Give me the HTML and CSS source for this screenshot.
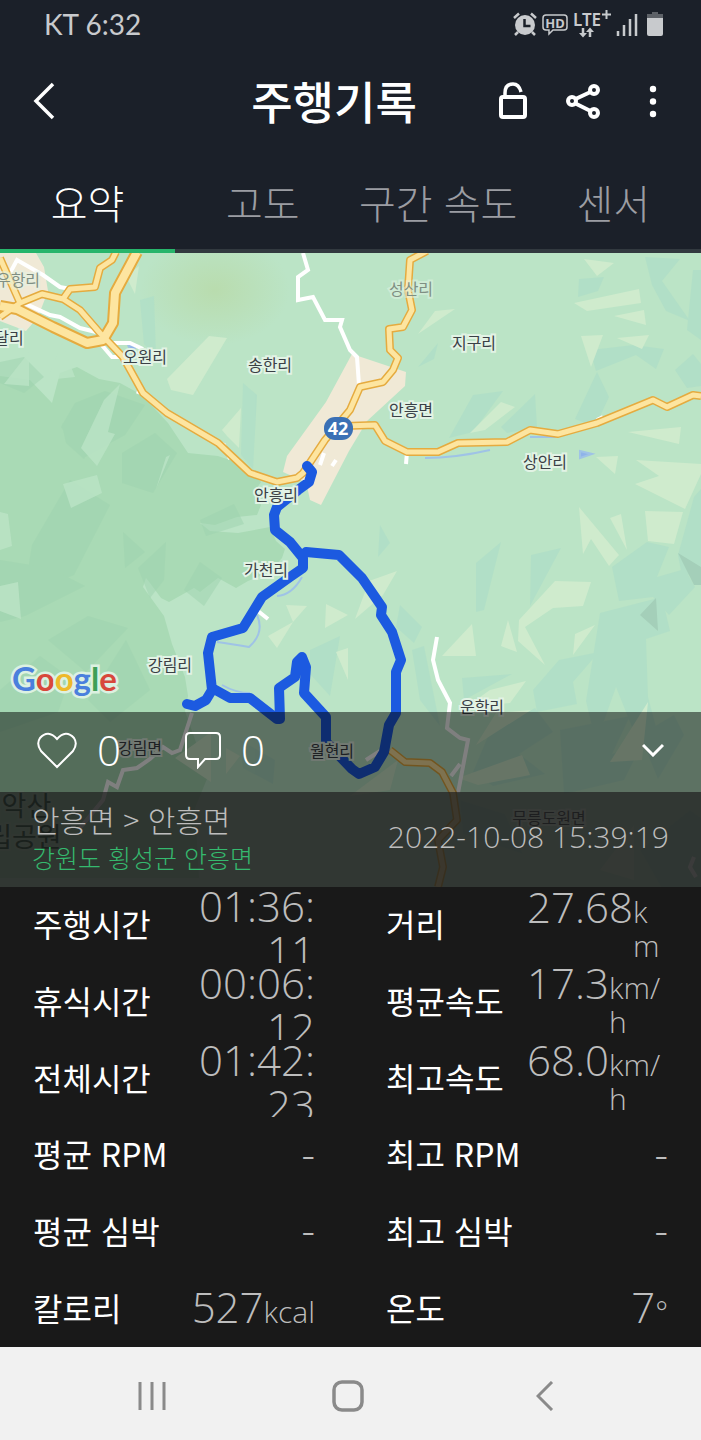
FILE: index.html
```html
<!DOCTYPE html>
<html lang="ko">
<head>
    <meta charset="UTF-8">
    <title>주행기록</title>
    <meta name="viewport" content="width=device-width, initial-scale=1.0">
    <link rel="stylesheet" href="styles.css">
</head>
<body>
    <div class="status-bar">
        <span>KT 6:32</span>
        <div class="status-icons">
            <!-- alarm -->
            <svg width="26" height="26" viewBox="0 0 26 26">
                <circle cx="13" cy="14" r="10" fill="#c8cacd"/>
                <path d="M2 7l5-4.500M24 7l-5-4.500M6 21l-3 3M20 21l3 3" stroke="#c8cacd" stroke-width="2.500" fill="none"/>
                <path d="M12.500 8v7h6" stroke="#1b2029" stroke-width="2.500" fill="none"/>
            </svg>
            <!-- HD voice -->
            <svg width="26" height="26" viewBox="0 0 26 26">
                <path d="M4 4h18q3 0 3 3v9q0 3-3 3H11l-4 4v-4H4q-3 0-3-3V7q0-3 3-3z" stroke="#c8cacd" stroke-width="1.500" fill="none"/>
                <text x="13" y="16.500" class="hd-text">HD</text>
            </svg>
            <!-- network -->
            <svg width="40" height="28" viewBox="0 0 40 28">
                <text x="1" y="16" class="lte-text">LTE</text>
                <path d="M30 4.500h9M34.500 0v9" stroke="#c8cacd" stroke-width="2"/>
                <path d="M11 18v7M18 27v-7" stroke="#c8cacd" stroke-width="2.500"/>
                <path d="M7 23h8l-4 4.500zM14 22h8l-4-4.500z" fill="#c8cacd"/>
            </svg>
            <!-- signal -->
            <svg width="22" height="26" viewBox="0 0 22 26">
                <path d="M2 20v5M8 14v11M14 8v17M20 3v22" stroke="#c8cacd" stroke-width="2.500"/>
            </svg>
            <!-- battery -->
            <svg width="16" height="26" viewBox="0 0 16 26">
                <path d="M5 1h6v2h5v5H0V3h5z" fill="#5d6167"/>
                <path d="M0 7h16v16q0 2-2 2H2q-2 0-2-2z" fill="#c8cacd"/>
            </svg>
        </div>
    </div>

    <header class="header">
        <button class="icon-btn back" aria-label="뒤로">
            <svg width="24" height="38" viewBox="0 0 24 38"><path d="M21 2L4 19l17 17" stroke="#fff" stroke-width="3.500" fill="none"/></svg>
        </button>
        <h1>주행기록</h1>
        <div class="actions">
            <button class="icon-btn" aria-label="잠금 해제">
                <svg width="30" height="38" viewBox="0 0 30 38" fill="none" stroke="#fff" stroke-width="4">
                    <rect x="3" y="15" width="24" height="20" rx="2"/>
                    <path d="M7 15v-4Q7 2 15 2q6 0 8 8" stroke-width="3.500"/>
                </svg>
            </button>
            <button class="icon-btn" aria-label="공유">
                <svg width="36" height="38" viewBox="0 0 36 38" fill="none" stroke="#fff" stroke-width="4">
                    <circle cx="7" cy="19" r="4"/>
                    <circle cx="29" cy="8" r="4"/>
                    <circle cx="29" cy="31" r="4"/>
                    <path d="M10.500 17l15-7M10.500 21.500l15 7.500"/>
                </svg>
            </button>
            <button class="icon-btn" aria-label="더보기">
                <svg width="8" height="38" viewBox="0 0 8 38" fill="#fff">
                    <circle cx="4" cy="7" r="3.200"/>
                    <circle cx="4" cy="19.500" r="3.200"/>
                    <circle cx="4" cy="32" r="3.200"/>
                </svg>
            </button>
        </div>
    </header>

    <nav class="tabs">
        <button class="tab active">요약</button>
        <button class="tab">고도</button>
        <button class="tab">구간 속도</button>
        <button class="tab">센서</button>
    </nav>

    <main class="map">
        <svg class="map-canvas" viewBox="0 253 701 634" preserveAspectRatio="xMidYMid slice">
            <defs>
                <radialGradient id="haze">
                    <stop offset="0" stop-color="#b9dcae"/>
                    <stop offset="1" stop-color="#b9dcae" stop-opacity="0"/>
                </radialGradient>
            </defs>
            <rect y="253" width="701" height="634" fill="#bbe4c6"/>
            <ellipse cx="215" cy="290" rx="75" ry="55" fill="url(#haze)"/>

            <!-- forest -->
            <path class="forest" d="M0 376l30 4 22 23 8-30 17-6 22 12 21 4 22 12 26 28 20 30 30 3 18 6 13 8 12 12-6 9 6 14-4 10-20 2-22 8-15-2 10 8 28 2 32-6 6 14 9 8-3 9-12 14-22 9-12 7-18-10-18 14-6-4-25 14-8-4-11-15-4-5-3 9 21 29 8 28 13 33 3 19-3 15 14 40 10 23-14 34 4 70H0z"/>
            <g class="shade">
                <path d="M0 362l24-5 20 20-20 16-24-10zM75 403l30-12 40 14-20 30-40 22-24-30z"/>
                <path d="M62 425l18-20 22 20-18 34-18-16zM70 480l40 25-36 70-50 20 8-50z"/>
                <path d="M122 453l33-20 22 20-24 40-31-10zM123 532l22 20-20 16zM138 568l28-26-2 38-14 18z"/>
                <path d="M184 590l16-28 22 16-18 28zM0 560l50 8 35 18-60 30-25 6zM48 640l40-24 40 12-42 44z"/>
                <path d="M0 690l40-34 30 22-12 34-58 20zM88 700l38-60 24 50-40 32zM200 520l34-16 10 20-38 12z"/>
            </g>
            <g class="pale">
                <path d="M63 484l34-9 5 18-31 15zM0 512l8 2 4 32-12 4zM0 586l18-4 3 37-21-8z"/>
                <path d="M104 400l16-16-12 48 7 2-18 32-16-18zM45 385l17-42 13 34-28 3z"/>
                <path d="M4 384l25-32v34zM170 455l-14 34 10-32z"/>
            </g>

            <!-- woods and open land -->
            <g class="wood">
                <path d="M140 300l14-4 2 60-12-12zM243 383l14 12-4 74-12-14zM579 279l25-2-6 14-20 6z"/>
                <path d="M645 257l35 2-18 22 28 40-24-10-14-26zM596 371l-6-21 44-5 30 4-8 20-20-14z"/>
                <path d="M693 270h8v70l-14-10zM675 370l18-16 8 10v22l-14 2zM597 372l12 25-14 30-20-8z"/>
                <path d="M473 395l30-4-30 41-24 6zM501 427l34-33 2 33-30 6zM418 367l20-24-4 16z"/>
                <path d="M476 563l25-21-17 68-8 2zM531 555l30-7-31 58zM380 525l10 18-12 14z"/>
                <path d="M612 567l35-25 22 5-12 30 28-8 10 18-26 28-16-18-34 4z"/>
                <path d="M678 555l16-58 7-8v92l-20-10zM600 613l62-16 8 34-24 8 2 58 16 60-30-25-18-45-20 56-10-42z"/>
                <path d="M533 690l26-30 40-8-26 30 4 22-40 8zM400 605l22 22-8 16-18-16zM412 650l12-4 16 80-20-26z"/>
                <path d="M473 772l16-38 46-26 18 24-34 22 26 20-52 12zM560 730l70-14-18 38 30-10-18 36-60 14z"/>
                <path d="M640 735l34-20 10 20-26 44zM460 800l45 14 18 40-60-20zM640 850l50-40 11 8v69h-40z"/>
                <path d="M310 650l30-14-10 60-20-22zM240 740l35 20-2 24-30-16zM462 678l50-4-48 26z"/>
            </g>
            <g class="open">
                <path d="M167 379l42-43 18 2-34 57-22-5zM222 430l19-22-2 40-12-12zM126 276l13-10-4 28z"/>
                <path d="M584 259l30 4-17 13zM574 303l65-14 2 14-54 8zM614 316l30-6 2 15zM581 336l22-1-12 32zM617 338l32-3-7 14z"/>
                <path d="M435 311l20-2-37 25zM470 433l31-31 14 5-30 23zM628 432l53-5-2 17zM596 457l22-1-3 18z"/>
                <path d="M636 460l65 4v10l-16 35-50-25 24-8zM645 511l38 1-9 32-26-3zM579 507l40 48-10 11-18-27-8 15z"/>
                <path d="M610 518l11-4 6 36zM555 581l36 1-8 24-30 2-28 19 20 38-27-24 1-21zM442 656l30-32 4 32zM508 620l9 32-16-6z"/>
                <path d="M575 634l20-9-22 30zM369 581l28-10-14 24-28 24zM490 690l36-9-16 22-44 4zM286 605l21 1-14 16z"/>
                <path d="M326 604l22 11-23 13zM268 636l25-14-16 26zM336 652l12-4v32zM350 796l48-36-8 30z"/>
                <path d="M458 778l64-23 8 20-52 10zM476 745l20-32 35-3zM610 762l38-60-6 58zM600 870l34-45v55z"/>
                <path d="M175 758l36-26v50zM226 748l14 8-14 18z"/>
            </g>
            <path class="rock" d="M678 553l23 14v18h-7zM640 615l16-17 2 33z"/>

            <!-- villages -->
            <path class="village" d="M0 253h36l8 14 4 24-10 26-12 14-26-10zM352 354l54 18-1 14-38 35-18 30-28 54-11-5-3-14-6-6-18-8 4-16 39-54z"/>

            <!-- streams -->
            <g class="stream">
                <path d="M425 458q30 0 65-8M302 577q-10 18-25 19M257 615q8 18-8 32-18-3-32-5M222 685q14 8 28 8M530 437h26"/>
                <path d="M580 451l12 3-12 4zM128 345l8 1-4 8z" fill="#8fb3ea"/>
            </g>

            <!-- local roads -->
            <g class="lane">
                <path d="M303 253l5 17-10 7v23l15-3 12 23h17l-2 7 10 23 7 7 2 28"/>
                <path d="M437 637l-4 23 5 20 12 23-3 25 13 10 8 2-10 53M460 764l-9 12M366 760l14-9"/>
                <path d="M192 713l-12 37-8 3-9-6-13 12-13 9-14 2-6 17-9-5-5 18-23 28"/>
                <path d="M10 273l7-13 26 15 17 12 10 2M22 302l28 13 10 2 20 11 20 5M100 343l12 14h12M113 343h17l13 6"/>
                <path d="M218 442l6 3 6 14M407 452l-1 12M140 388l-2 6M597 420l6-3M258 611l10 8M320 465l4-12M332 466l4-6M694 857l-4 10 6 10"/>
            </g>

            <!-- highways, drawn as casing + fill -->
            <g class="road-casing">
                <path class="wide" d="M0 306l17 3 36 18 34 16 16-3 10-17 2-30 22-41"/>
                <path d="M0 258l20 45 22-9 21 5 17 11 20 23 23 24 20 36 24 20 51 30 32 30 27 9 20-4 6-5 22-33 25-30 10-23 23-5 10-12 5-12-8-8-1-21 14-2 9-17-4-20 2-30 17-9M63 299l7-10 25-2 5-19 12-8 4-8M20 303l-20 14"/>
                <path d="M345 426l30-1 10 16 22 11h31l20-9 49-1 23-12 28 4 39-11 56-23 14 7 26-12 8 1"/>
                <path d="M390 750l15 12 25 1 12 9 11 21 4 27-19 20 5 27-5 20"/>
            </g>
            <g class="road">
                <path class="wide" d="M0 306l17 3 36 18 34 16 16-3 10-17 2-30 22-41"/>
                <path d="M0 258l20 45 22-9 21 5 17 11 20 23 23 24 20 36 24 20 51 30 32 30 27 9 20-4 6-5 22-33 25-30 10-23 23-5 10-12 5-12-8-8-1-21 14-2 9-17-4-20 2-30 17-9M63 299l7-10 25-2 5-19 12-8 4-8M20 303l-20 14"/>
                <path d="M345 426l30-1 10 16 22 11h31l20-9 49-1 23-12 28 4 39-11 56-23 14 7 26-12 8 1"/>
                <path d="M390 750l15 12 25 1 12 9 11 21 4 27-19 20 5 27-5 20"/>
            </g>

            <rect x="324" y="417" width="29" height="23" rx="11" fill="#3a70b5"/>
            <text x="338" y="435" class="shield">42</text>

            <!-- ridden track -->
            <path class="track" d="M307 466l5 6-3 10-11 8-21 17-3 8 1 15 15 12 13 16v10l-13 9-28 20-19 31-31 9-4 16 4 37-6 10-11 6-8-2M212 688l18 10h20l27 21h3l-1-31 16-11 2-15 5-5 4 10-2 26 22 24v25l26 27 7 5 16-7 9-15 5-27 7-12v-41l5-12-9-28-11-17 1-8-20-29-23-23-33-3"/>

            <g class="places">
                <text x="18" y="286" class="faded">우항리</text>
                <text x="9" y="344">달리</text>
                <text x="145" y="363">오원리</text>
                <text x="270" y="371">송한리</text>
                <text x="411" y="295" class="faded">성산리</text>
                <text x="474" y="349">지구리</text>
                <text x="411" y="416">안흥면</text>
                <text x="545" y="468">상안리</text>
                <text x="276" y="501">안흥리</text>
                <text x="266" y="576">가천리</text>
                <text x="170" y="671">강림리</text>
                <text x="482" y="713">운학리</text>
                <text x="140" y="754">강림면</text>
                <text x="332" y="757">월현리</text>
                <text x="549" y="824">무릉도원면</text>
                <text x="14" y="816" class="park">치악산</text>
                <text x="12" y="847" class="park">국립공원</text>
            </g>
            <text x="12" y="691" class="google"><tspan fill="#4a80dd">G</tspan><tspan fill="#d8483b">o</tspan><tspan fill="#eeb92b">o</tspan><tspan fill="#4a80dd">g</tspan><tspan fill="#3f9f57">l</tspan><tspan fill="#d8483b">e</tspan></text>
        </svg>

        <div class="overlay">
            <div class="social">
                <button class="count">
                    <svg width="40" height="38" viewBox="0 0 40 38"><path d="M20 36L4 20Q-1 13 3 7q8-9 17 1 9-10 17-1 4 6-1 13z" fill="none" stroke="#fff" stroke-width="2"/></svg>
                    0
                </button>
                <button class="count">
                    <svg width="36" height="38" viewBox="0 0 36 38"><path d="M5 2h26q4 0 4 4v18q0 4-4 4H20l-7 8v-8H5q-4 0-4-4V6q0-4 4-4z" fill="none" stroke="#fff" stroke-width="2"/></svg>
                    0
                </button>
                <button class="collapse" aria-label="접기">
                    <svg width="22" height="14" viewBox="0 0 22 14"><path d="M1 2l10 10L21 2" fill="none" stroke="#fff" stroke-width="3"/></svg>
                </button>
            </div>
            <div class="info">
                <div>
                    <p class="course">안흥면 &gt; 안흥면</p>
                    <p class="region">강원도 횡성군 안흥면</p>
                </div>
                <time datetime="2022-10-08T15:39:19">2022-10-08 15:39:19</time>
            </div>
        </div>
    </main>

    <dl class="stats">
        <div class="stat"><dt>주행시간</dt><dd><span class="num">01:36:<wbr>11</span></dd></div>
        <div class="stat"><dt>거리</dt><dd><span class="num">27.68</span><span class="unit">km</span></dd></div>
        <div class="stat"><dt>휴식시간</dt><dd><span class="num">00:06:<wbr>12</span></dd></div>
        <div class="stat"><dt>평균속도</dt><dd><span class="num">17.3</span><span class="unit">km/h</span></dd></div>
        <div class="stat"><dt>전체시간</dt><dd><span class="num">01:42:<wbr>23</span></dd></div>
        <div class="stat"><dt>최고속도</dt><dd><span class="num">68.0</span><span class="unit">km/h</span></dd></div>
        <div class="stat"><dt>평균 RPM</dt><dd><span class="num">-</span></dd></div>
        <div class="stat"><dt>최고 RPM</dt><dd><span class="num">-</span></dd></div>
        <div class="stat"><dt>평균 심박</dt><dd><span class="num">-</span></dd></div>
        <div class="stat"><dt>최고 심박</dt><dd><span class="num">-</span></dd></div>
        <div class="stat"><dt>칼로리</dt><dd><span class="num">527</span><span class="unit">kcal</span></dd></div>
        <div class="stat"><dt>온도</dt><dd><span class="num">7</span><span class="unit">°</span></dd></div>
    </dl>

    <div class="nav-bar">
        <button aria-label="최근 앱">
            <svg width="28" height="30" viewBox="0 0 28 30"><path d="M2 1v28M14 1v28M26 1v28" stroke="#8a8a8a" stroke-width="3"/></svg>
        </button>
        <button aria-label="홈">
            <svg width="32" height="32" viewBox="0 0 32 32"><rect x="2" y="2" width="28" height="28" rx="8" fill="none" stroke="#8a8a8a" stroke-width="3.500"/></svg>
        </button>
        <button aria-label="뒤로">
            <svg width="18" height="30" viewBox="0 0 18 30"><path d="M16 1L2 15l14 14" fill="none" stroke="#8a8a8a" stroke-width="3"/></svg>
        </button>
    </div>
</body>
</html>
```

FILE: styles.css
```css
* {
    box-sizing: border-box;
}
body {
    margin: 0;
    min-height: 100vh;
    display: flex;
    flex-direction: column;
    background-color: #191919;
    color: #fff;
    font-family: "Noto Sans CJK KR", sans-serif;
}
button {
    border: 0;
    padding: 0;
    background: none;
    color: inherit;
    font: inherit;
}
svg {
    display: block;
}
h1, p, dl, dd {
    margin: 0;
}

/* top bars */
.status-bar {
    height: 48px;
    padding: 0 38px 0 44px;
    display: flex;
    justify-content: space-between;
    align-items: center;
    background-color: #1b2029;
    color: #c8cacd;
    font: 28px Lato, sans-serif;
}
.status-icons {
    display: flex;
    align-items: center;
    gap: 4px;
}
.status-icons svg {
    overflow: visible;
}
.status-icons svg:last-child {
    margin-left: 5px;
}
.hd-text {
    font: bold 13px "Noto Sans", sans-serif;
    fill: #c8cacd;
    text-anchor: middle;
}
.lte-text {
    font: 600 17px "Noto Sans", sans-serif;
    fill: #c8cacd;
}
.header {
    height: 106px;
    display: grid;
    grid-template-columns: 190px 1fr 223px;
    align-items: center;
    background-color: #1b2029;
}
.header h1 {
    font-size: 45px;
    font-weight: 500;
    line-height: 56px;
    text-align: center;
    white-space: nowrap;
}
.actions {
    display: flex;
}
.icon-btn {
    width: 70px;
    height: 70px;
    display: flex;
    justify-content: center;
    align-items: center;
}
.back {
    width: 88px;
}
.tabs {
    height: 99px;
    display: flex;
    background-color: #1b2029;
}
.tab {
    flex: 1;
    border-bottom: 4px solid #32393f;
    color: #9b9da3;
    font-size: 40px;
    font-weight: 300;
    white-space: nowrap;
}
.tab.active {
    border-color: #27b56b;
    color: #fff;
}

/* map */
.map {
    position: relative;
    flex: 1 0 480px;
    overflow: hidden;
}
.map-canvas {
    position: absolute;
    width: 100%;
    height: 100%;
}
.forest {
    fill: #a9dab5;
}
.shade {
    fill: #9fd4b0;
    opacity: 0.5;
}
.pale {
    fill: #bbe4c6;
    opacity: 0.8;
}
.wood {
    fill: #aedec8;
    opacity: 0.7;
}
.open {
    fill: #cfebcd;
}
.rock {
    fill: #a4cfb9;
}
.village {
    fill: #f0e9d6;
}
.stream {
    fill: none;
    stroke: #9fc3e6;
    stroke-width: 2;
}
.lane {
    fill: none;
    stroke: #fff;
    stroke-width: 4;
}
.road-casing, .road {
    fill: none;
    stroke-linejoin: round;
}
.road-casing {
    stroke: #e5ab3f;
    stroke-width: 8;
}
.road {
    stroke: #fde5a0;
    stroke-width: 5;
}
.road-casing .wide {
    stroke-width: 12;
}
.road .wide {
    stroke-width: 8;
}
.track {
    fill: none;
    stroke: #1c5ae0;
    stroke-width: 10;
    stroke-linejoin: round;
    stroke-linecap: round;
}
.shield {
    font: bold 18px "Noto Sans", sans-serif;
    fill: #fff;
    text-anchor: middle;
}
.places {
    font-size: 16px;
    fill: #3a4046;
    stroke: #e2f3e5;
    stroke-width: 4px;
    paint-order: stroke;
    text-anchor: middle;
}
.places .faded {
    fill: #7f8f83;
    stroke-opacity: 0.5;
}
.places .park {
    font-size: 27px;
    fill: #1f4a33;
    stroke: #b4d9bd;
}
.google {
    font: bold 33px Lato, sans-serif;
    stroke: #dcf1e1;
    stroke-width: 5px;
    paint-order: stroke;
}

/* panels over the map */
.overlay {
    position: absolute;
    left: 0;
    right: 0;
    bottom: 0;
}
.social {
    height: 80px;
    padding: 0 37px 4px;
    display: flex;
    align-items: center;
    gap: 64px;
    background-color: rgba(0, 0, 0, 0.5);
}
.count {
    display: flex;
    align-items: center;
    gap: 20px;
    font: 300 42px/60px "Open Sans", sans-serif;
}
.collapse {
    margin-left: auto;
}
.info {
    height: 95px;
    padding: 0 32px 6px;
    display: flex;
    justify-content: space-between;
    align-items: center;
    background-color: rgba(25, 25, 25, 0.85);
    color: #bdbdbd;
    font-weight: 300;
}
.course {
    font-size: 30px;
    line-height: 40px;
}
.region {
    color: #35b96e;
    font-size: 25px;
    line-height: 36px;
}
.info time {
    font-family: "Open Sans", sans-serif;
    font-size: 30px;
}

/* ride data */
.stats {
    min-height: 460px;
    padding: 0 33px;
    display: grid;
    grid-template-columns: 1fr 1fr;
    grid-auto-rows: 1fr;
    column-gap: 71px;
    background-color: #191919;
}
.stat {
    display: grid;
    grid-template-columns: 1fr 1fr;
    align-items: center;
}
.stat dt {
    padding-bottom: 4px;
    font-size: 32px;
    line-height: 44px;
    white-space: nowrap;
}
.stat dd {
    max-height: 76px;
    overflow: hidden;
    display: flex;
    justify-content: flex-end;
    align-items: baseline;
    color: #bdbdbd;
    font-family: "Open Sans", sans-serif;
    font-weight: 300;
    text-align: right;
}
.num {
    margin-top: -4px;
    font-size: 42px;
    line-height: 45px;
}
.num:not(:last-child) {
    flex-shrink: 0;
}
.unit {
    font-size: 30px;
    line-height: 34px;
    text-align: left;
    word-break: break-all;
}

/* system navigation */
.nav-bar {
    height: 93px;
    padding: 0 58px 0 54px;
    display: flex;
    background-color: #f1f1f1;
}
.nav-bar button {
    flex: 1;
    display: flex;
    justify-content: center;
    align-items: center;
    padding-top: 4px;
}
```
